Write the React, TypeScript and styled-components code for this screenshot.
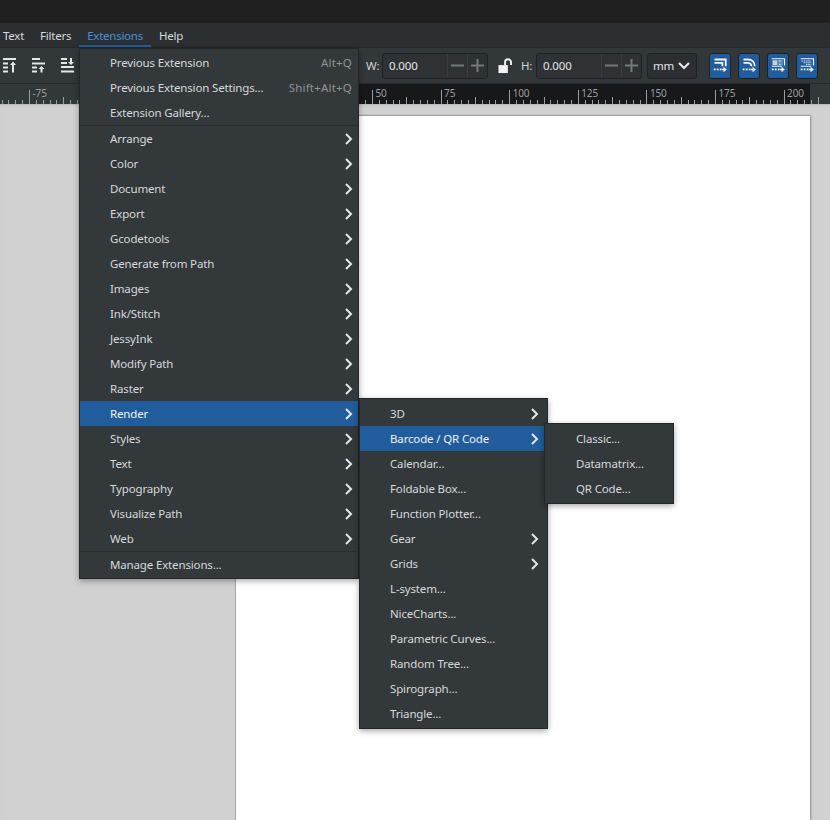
import React from "react";
import styled, { createGlobalStyle } from "styled-components";

const GlobalStyle = createGlobalStyle`
  html, body {
    margin: 0;
    padding: 0;
    height: 100%;
    overflow: hidden;
    background: #d1d1d1;
  }
  #root {
    height: 100%;
  }
`;

// window chrome
const Shell = styled.div`
  width: 830px;
  height: 820px;
  display: flex;
  flex-direction: column;
  position: relative;
  overflow: hidden;
  font-family: "Noto Sans", "Open Sans", sans-serif;
  font-size: 11.5px;
  letter-spacing: -0.15px;
  color: #d6d9da;
`;

const TitleBar = styled.div`
  height: 23px;
  background: #202020;
`;

const MenuBar = styled.div`
  height: 24px;
  display: flex;
  background: #2b2f32;
  margin-left: -5px;
  letter-spacing: -0.25px;
`;

const MenuBarItem = styled.div<{ $active?: boolean }>`
  padding: 0 8px;
  line-height: 25px;
  color: ${(p) => (p.$active ? "#4a90d9" : "#d6d9da")};
  box-shadow: ${(p) => (p.$active ? "inset 0 -2px 0 #215d9c" : "none")};
`;

const Toolbar = styled.div`
  height: 36px;
  display: flex;
  align-items: center;
  background: #32373a;
  border-top: 1px solid #26292c;
  box-sizing: border-box;
  padding: 0 12px 0 3px;
`;

const AlignGroup = styled.div`
  display: flex;
  gap: 16px;
`;

const Transform = styled.div`
  margin-left: auto;
  display: flex;
  align-items: center;
`;

const FieldLabel = styled.span`
  width: 16px;
  color: #cfd3d5;
`;

const Field = styled.div`
  width: 106px;
  height: 26px;
  box-sizing: border-box;
  display: flex;
  align-items: stretch;
  background: #2e3235;
  border: 1px solid #1f2224;
  border-radius: 3px;
`;

const FieldValue = styled.span`
  flex: 1;
  padding-left: 6px;
  line-height: 24px;
  color: #e2e4e5;
`;

const Stepper = styled.span`
  width: 19px;
  display: flex;
  align-items: center;
  justify-content: center;
  border-left: 1px solid #393d40;
`;

const LockSlot = styled.span`
  width: 48px;
  box-sizing: border-box;
  padding-left: 10px;
  display: flex;
  align-items: center;
  gap: 8px;
`;

const UnitSelect = styled.div`
  width: 50px;
  height: 26px;
  margin-left: 5px;
  box-sizing: border-box;
  display: flex;
  align-items: center;
  justify-content: space-between;
  padding: 0 5px 0 5px;
  background: #2b2f32;
  border: 1px solid #1f2224;
  border-radius: 3px;
  color: #e2e4e5;
`;

const SnapGroup = styled.div`
  display: flex;
  gap: 7px;
  margin-left: 12px;
`;

const SnapButton = styled.button`
  width: 22px;
  height: 26px;
  padding: 0;
  display: flex;
  align-items: center;
  justify-content: center;
  background: #215d9c;
  border: 1px solid #1b2126;
  border-radius: 3px;
`;

const RulerBar = styled.div`
  height: 21px;
  background: #32373a;
  border-top: 1px solid #26292c;
  box-sizing: border-box;
`;

const Canvas = styled.div`
  flex: 1;
  min-height: 0;
  display: flex;
  padding: 12px 20px 0 236px;
  background: #d1d1d1;
  box-shadow: inset 0 2px 2px -1px #b4b4b4;
`;

const Page = styled.div`
  flex: 1;
  background: #ffffff;
  box-shadow: 1px 0 2px #8f8f8f, 0 -1px 1px #a8a8a8, -1px 0 1px #b0b0b0;
`;

// menus
const Menu = styled.div<{ $width: number }>`
  width: ${(p) => p.$width}px;
  box-sizing: border-box;
  padding: 2px 0;
  background: #33383b;
  border: 1px solid #23272a;
  box-shadow: 0 2px 6px rgba(0, 0, 0, 0.35);
`;

const RootMenu = styled(Menu)`
  position: absolute;
  left: 79px;
  top: 48px;
  z-index: 2;
  padding: 1px 0;
`;

const Flyout = styled(Menu)<{ $top: number; $left: string }>`
  position: absolute;
  top: ${(p) => p.$top}px;
  left: ${(p) => p.$left};
  z-index: 3;
`;

const Row = styled.div<{ $active?: boolean; $inset?: number }>`
  position: relative;
  height: 25px;
  display: flex;
  align-items: center;
  padding: 0 6px 0 ${(p) => p.$inset ?? 30}px;
  background: ${(p) => (p.$active ? "#215d9c" : "transparent")};
  color: ${(p) => (p.$active ? "#f0f2f3" : "#d6d9da")};
`;

const RowLabel = styled.span`
  flex: 1;
  white-space: nowrap;
`;

const Shortcut = styled.span`
  color: #8f9497;
  letter-spacing: 0.2px;
`;

const Separator = styled.div`
  height: 1px;
  background: #2b2f32;
`;

const ChevronMark = styled.svg<{ $shift: number }>`
  margin-right: ${(p) => p.$shift}px;
`;

// drawn icons
const Chevron = ({ shift }: { shift: number }) => (
  <ChevronMark $shift={shift} width="10" height="12" viewBox="0 0 10 12">
    <path d="M2 1 L7 6 L2 11" fill="none" stroke="#e4e6e7" strokeWidth="2" />
  </ChevronMark>
);

const AlignIcon = ({ bars, arrow }: { bars: [number, number][]; arrow: string }) => (
  <svg width="13" height="15" viewBox="0 0 13 15">
    {bars.map(([y, w], i) => (
      <rect key={i} x="0" y={y} width={w} height="2" fill="#e4e6e7" />
    ))}
    <path d={arrow} fill="#e4e6e7" />
  </svg>
);

const MinusPlus = ({ plus }: { plus?: boolean }) => (
  <svg width="13" height="13" viewBox="0 0 13 13">
    <rect x="0" y="5.5" width="13" height="2" fill="#73787b" />
    {plus && <rect x="5.5" y="0" width="2" height="13" fill="#73787b" />}
  </svg>
);

const LockIcon = () => (
  <svg width="16" height="16" viewBox="0 0 16 16">
    <rect x="0.5" y="7" width="10" height="8.5" fill="#f2f2f2" />
    <path d="M7.5 7 V4 a3.2 3.2 0 0 1 6.4 0 V7" fill="none" stroke="#f2f2f2" strokeWidth="2" />
  </svg>
);

const ChevronDown = () => (
  <svg width="14" height="10" viewBox="0 0 14 10">
    <path d="M2 2 L7 7 L12 2" fill="none" stroke="#e4e6e7" strokeWidth="2.2" />
  </svg>
);

const DottedArrow = () => (
  <g fill="#f2f4f5">
    <rect x="1" y="14" width="2.4" height="2.4" />
    <rect x="5" y="14" width="2.4" height="2.4" />
    <rect x="9" y="14" width="2.4" height="2.4" />
    <path d="M12 14.2 h2 v-2.7 l4.5 3.7 l-4.5 3.7 v-2.7 h-2 z" />
  </g>
);

const SnapIcon = ({ kind }: { kind: number }) => (
  <svg width="15" height="15" viewBox="0 0 20 20">
    {kind === 0 && <path d="M2 2 H17 V11 M2 6.5 H12.5 V11" fill="none" stroke="#f2f4f5" strokeWidth="2.4" />}
    {kind === 1 && (
      <path d="M2 2 H8 C13.5 2 17 5.5 17 11 M2 6.5 H7 C10.5 6.5 12.5 8 12.5 11" fill="none" stroke="#f2f4f5" strokeWidth="2.4" />
    )}
    {kind === 2 && (
      <>
        <path d="M1 1 H18 V10 M1 11 H15" fill="none" stroke="#f2f4f5" strokeWidth="1.5" />
        <path d="M2 3 h14 v6.5 h-14 z" fill="#c3d0dd" />
        <path d="M8 3 h2.5 v2 h2.5 v-2 h3 v6.5 h-3 v-2 h-2.5 v2 h-2.5 z" fill="#5f86ae" />
      </>
    )}
    {kind === 3 && (
      <>
        <path d="M1 1 H18 V10 M1 11 H15" fill="none" stroke="#f2f4f5" strokeWidth="1.5" />
        <path d="M2 4 H15 M5 6.3 H15 M8 8.6 H15" fill="none" stroke="#dfe6ec" strokeWidth="1.3" strokeDasharray="2 1" />
      </>
    )}
    <DottedArrow />
  </svg>
);

// ruler drawing: 6.86px per tick, 68.6px per 25 units, page zone is darker
const Ruler = () => {
  const ticks: React.ReactNode[] = [];
  for (let i = -4; i < 116; i++) {
    const x = 29 + i * 6.86;
    const h = i % 10 === 0 ? 14 : i % 5 === 0 ? 7 : 4;
    ticks.push(<rect key={i} x={Math.round(x)} y={20 - h} width="1" height={h} fill="#9a9ea0" />);
  }
  const labels = [-75, 50, 75, 100, 125, 150, 175, 200];
  return (
    <svg width="830" height="20" style={{ display: "block" }}>
      <rect x="236" y="0" width="574" height="20" fill="#17181a" />
      {ticks}
      {labels.map((v) => (
        <text key={v} x={29 + ((v + 75) / 25) * 68.6 + 3.5} y="13" fontSize="10" fontFamily="Noto Sans, sans-serif" fill="#9a9ea0">
          {v}
        </text>
      ))}
    </svg>
  );
};

const rootTop = [
  { label: "Previous Extension", shortcut: "Alt+Q" },
  { label: "Previous Extension Settings...", shortcut: "Shift+Alt+Q" },
  { label: "Extension Gallery..." },
];

const rootSubmenus = ["Arrange", "Color", "Document", "Export", "Gcodetools", "Generate from Path", "Images", "Ink/Stitch", "JessyInk", "Modify Path", "Raster", "Render", "Styles", "Text", "Typography", "Visualize Path", "Web"];

const renderItems = [
  { label: "3D", sub: true },
  { label: "Barcode / QR Code", sub: true },
  { label: "Calendar..." },
  { label: "Foldable Box..." },
  { label: "Function Plotter..." },
  { label: "Gear", sub: true },
  { label: "Grids", sub: true },
  { label: "L-system..." },
  { label: "NiceCharts..." },
  { label: "Parametric Curves..." },
  { label: "Random Tree..." },
  { label: "Spirograph..." },
  { label: "Triangle..." },
];

const barcodeItems = ["Classic...", "Datamatrix...", "QR Code..."];

const alignIcons: { bars: [number, number][]; arrow: string }[] = [
  { bars: [[0, 13], [4.5, 5], [8.5, 5], [12.5, 5]], arrow: "M10 3.5 l-3 3.5 h2 v7.5 h2 v-7.5 h2 z" },
  { bars: [[0, 8], [4.5, 13], [8.5, 5], [12.5, 5]], arrow: "M9.5 8 l-3 3 h2 v3.5 h2 v-3.5 h2 z" },
  { bars: [[0, 6], [4, 6], [8, 13], [12.5, 13]], arrow: "M10 7 l-3 -3 h2 v-4 h2 v4 h2 z" },
];

export default function App() {
  return (
    <>
      <GlobalStyle />
      <Shell>
        <TitleBar />
        <MenuBar>
          <MenuBarItem>Text</MenuBarItem>
          <MenuBarItem>Filters</MenuBarItem>
          <MenuBarItem $active>Extensions</MenuBarItem>
          <MenuBarItem>Help</MenuBarItem>
        </MenuBar>
        <Toolbar>
          <AlignGroup>
            {alignIcons.map((a, i) => (
              <AlignIcon key={i} {...a} />
            ))}
          </AlignGroup>
          <Transform>
            <FieldLabel>W:</FieldLabel>
            <Field>
              <FieldValue>0.000</FieldValue>
              <Stepper>
                <MinusPlus />
              </Stepper>
              <Stepper>
                <MinusPlus plus />
              </Stepper>
            </Field>
            <LockSlot>
              <LockIcon />
              <FieldLabel>H:</FieldLabel>
            </LockSlot>
            <Field>
              <FieldValue>0.000</FieldValue>
              <Stepper>
                <MinusPlus />
              </Stepper>
              <Stepper>
                <MinusPlus plus />
              </Stepper>
            </Field>
            <UnitSelect>
              mm
              <ChevronDown />
            </UnitSelect>
            <SnapGroup>
              {[0, 1, 2, 3].map((k) => (
                <SnapButton key={k}>
                  <SnapIcon kind={k} />
                </SnapButton>
              ))}
            </SnapGroup>
          </Transform>
        </Toolbar>
        <RulerBar>
          <Ruler />
        </RulerBar>
        <Canvas>
          <Page />
        </Canvas>

        <RootMenu $width={280}>
          {rootTop.map((r) => (
            <Row key={r.label}>
              <RowLabel>{r.label}</RowLabel>
              {r.shortcut && <Shortcut>{r.shortcut}</Shortcut>}
            </Row>
          ))}
          <Separator />
          {rootSubmenus.map((label) => (
            <Row key={label} $active={label === "Render"}>
              <RowLabel>{label}</RowLabel>
              <Chevron shift={-2} />
              {label === "Render" && (
                <Flyout $width={189} $top={-3} $left="calc(100% + 1px)">
                  {renderItems.map((r) => (
                    <Row key={r.label} $active={r.label === "Barcode / QR Code"}>
                      <RowLabel>{r.label}</RowLabel>
                      {r.sub && <Chevron shift={1.5} />}
                      {r.label === "Barcode / QR Code" && (
                        <Flyout $width={130} $top={-3} $left="calc(100% - 3px)">
                          {barcodeItems.map((b) => (
                            <Row key={b} $inset={31}>
                              <RowLabel>{b}</RowLabel>
                            </Row>
                          ))}
                        </Flyout>
                      )}
                    </Row>
                  ))}
                </Flyout>
              )}
            </Row>
          ))}
          <Separator />
          <Row>
            <RowLabel>Manage Extensions...</RowLabel>
          </Row>
        </RootMenu>
      </Shell>
    </>
  );
}
